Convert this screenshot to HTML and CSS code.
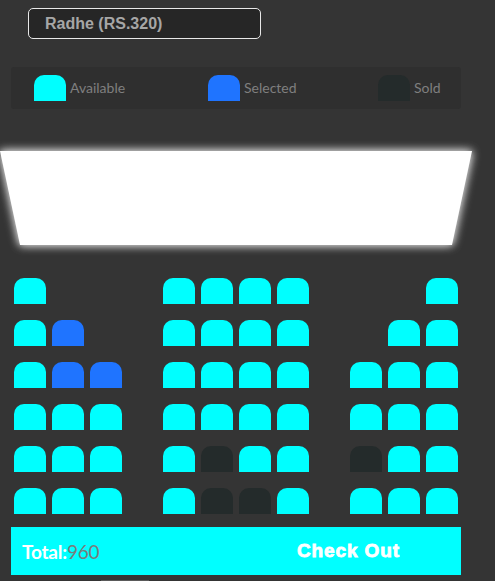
FILE: index.html
```html
<!DOCTYPE html>
<html lang="en">
<head>
<meta charset="utf-8">
<title>Movie Seat Booking</title>
<link rel="stylesheet" href="styles.css">
</head>
<body>
<div class="picker">
  <select class="movie">
    <option>Radhe (RS.320)</option>
  </select>
</div>

<ul class="legend">
  <li class="legend-item"><span class="seat"></span><small>Available</small></li>
  <li class="legend-item"><span class="seat selected"></span><small>Selected</small></li>
  <li class="legend-item"><span class="seat sold"></span><small>Sold</small></li>
</ul>

<div class="screen-glow"><div class="screen"></div></div>

<div class="hall">
  <div class="block b3">
    <span class="seat"></span><span class="gap"></span><span class="gap"></span>
    <span class="seat"></span><span class="seat selected"></span><span class="gap"></span>
    <span class="seat"></span><span class="seat selected"></span><span class="seat selected"></span>
    <span class="seat"></span><span class="seat"></span><span class="seat"></span>
    <span class="seat"></span><span class="seat"></span><span class="seat"></span>
    <span class="seat"></span><span class="seat"></span><span class="seat"></span>
  </div>
  <div class="block b4">
    <span class="seat"></span><span class="seat"></span><span class="seat"></span><span class="seat"></span>
    <span class="seat"></span><span class="seat"></span><span class="seat"></span><span class="seat"></span>
    <span class="seat"></span><span class="seat"></span><span class="seat"></span><span class="seat"></span>
    <span class="seat"></span><span class="seat"></span><span class="seat"></span><span class="seat"></span>
    <span class="seat"></span><span class="seat sold"></span><span class="seat"></span><span class="seat"></span>
    <span class="seat"></span><span class="seat sold"></span><span class="seat sold"></span><span class="seat"></span>
  </div>
  <div class="block b3">
    <span class="gap"></span><span class="gap"></span><span class="seat"></span>
    <span class="gap"></span><span class="seat"></span><span class="seat"></span>
    <span class="seat"></span><span class="seat"></span><span class="seat"></span>
    <span class="seat"></span><span class="seat"></span><span class="seat"></span>
    <span class="seat sold"></span><span class="seat"></span><span class="seat"></span>
    <span class="seat"></span><span class="seat"></span><span class="seat"></span>
  </div>
</div>

<div class="checkout">
  <p class="total">Total:<span class="amount">960</span></p>
  <button class="checkout-btn">Check Out</button>
</div>
<div class="tail"></div>
</body>
</html>
```

FILE: styles.css
```css
* { box-sizing: border-box; }

html, body {
  margin: 0;
  padding: 0;
  background: #343434;
  overflow: hidden;
}

body {
  font-family: "Lato", "Liberation Sans", sans-serif;
}

.picker {
  padding: 8px 0 0 28px;
}

.movie {
  -webkit-appearance: none;
  appearance: none;
  display: block;
  width: 233px;
  height: 31px;
  margin: 0;
  padding: 0 0 0 16px;
  background: #262626;
  border: 1.5px solid #e8e8e8;
  border-radius: 5px;
  color: #a6a6a6;
  font-family: "Liberation Sans", Arial, sans-serif;
  font-weight: bold;
  font-size: 16px;
  line-height: 28px;
  outline: none;
}

.legend {
  list-style: none;
  margin: 28px 0 0 11px;
  padding: 0 0 0 23px;
  width: 450px;
  height: 42px;
  background: #2f2f2f;
  border-radius: 3px;
  display: grid;
  grid-template-columns: 174px 170px 1fr;
  align-items: center;
}

.legend-item {
  display: flex;
  align-items: center;
  gap: 4px;
}

.legend-item small {
  font-size: 14px;
  color: #7f7f7f;
  line-height: 1;
}

.seat {
  display: block;
  width: 32px;
  height: 26px;
  background: #00ffff;
  border-radius: 10px 10px 0 0;
}

.seat.selected { background: #1f74ff; }
.seat.sold { background: #242b2b; }

.gap {
  display: block;
  width: 32px;
  height: 26px;
}

.screen-glow {
  margin-top: 42px;
  width: 472px;
  filter: drop-shadow(0 0 5px rgba(255, 255, 255, 0.85)) drop-shadow(0 0 3px rgba(255, 255, 255, 0.4));
}

.screen {
  height: 94px;
  background: #ffffff;
  clip-path: polygon(0 0, 100% 0, 452px 100%, 20px 100%);
}

.hall {
  display: flex;
  gap: 41px;
  padding-left: 14px;
  margin-top: 33px;
}

.block {
  display: grid;
  grid-auto-rows: 26px;
  column-gap: 6px;
  row-gap: 16px;
}

.b3 { grid-template-columns: repeat(3, 32px); }
.b4 { grid-template-columns: repeat(4, 32px); }

.checkout {
  margin: 13px 0 0 11px;
  width: 450px;
  height: 48px;
  background: #00ffff;
  display: flex;
  align-items: center;
  padding-left: 11px;
}

.total {
  margin: 0;
  font-family: "Lato", sans-serif;
  font-weight: bold;
  font-size: 19px;
  color: #ffffff;
  letter-spacing: -0.2px;
}

.amount {
  font-weight: normal;
  color: #7b7b7b;
}

.checkout-btn {
  margin-left: auto;
  margin-right: 61px;
  padding: 0;
  border: none;
  background: transparent;
  color: #ffffff;
  font-family: "Liberation Sans", Arial, sans-serif;
  font-weight: bold;
  font-size: 19px;
  letter-spacing: 0.9px;
  -webkit-text-stroke: 0.8px #ffffff;
  cursor: pointer;
}

.tail {
  margin: 5px 0 0 101px;
  width: 48px;
  height: 4px;
  background: #5a5a5a;
}
```
